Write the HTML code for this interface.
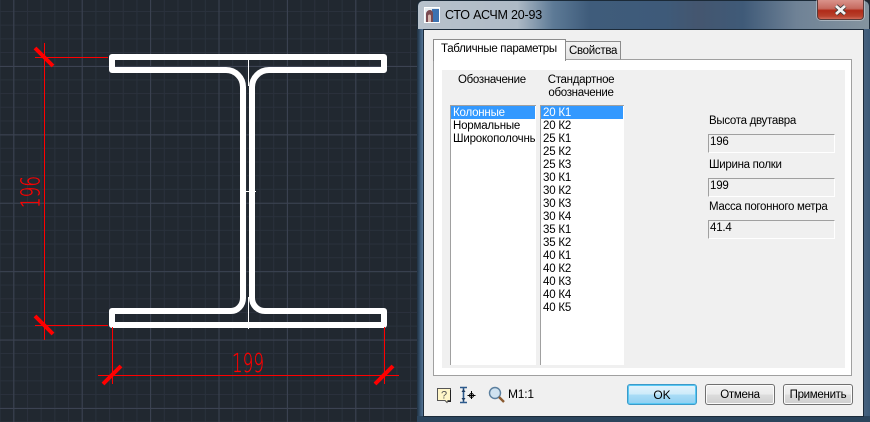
<!DOCTYPE html>
<html><head><meta charset="utf-8">
<style>
html,body{margin:0;padding:0;width:870px;height:422px;overflow:hidden;background:#212830}
*{box-sizing:border-box}
.a{position:absolute}
.t{position:absolute;font:11.5px/13px "Liberation Sans",sans-serif;letter-spacing:-.3px;color:#000;white-space:nowrap}
.row{position:absolute;left:0;right:0;height:13px;font:11.5px/15px "Liberation Sans",sans-serif;letter-spacing:-.2px;padding-left:2px;white-space:nowrap;overflow:hidden}
.sel{background:#3399ff;color:#fff;right:1px}
.box{position:absolute;left:708px;width:127px;height:19px;border:1px solid #fff;border-top-color:#a0a0a0;border-left-color:#a0a0a0;font:11.5px/15px "Liberation Sans",sans-serif;letter-spacing:-.2px;padding-left:1px;background:#f0f0f0}
.btn{position:absolute;top:384px;height:21px;border:1px solid #707070;border-radius:3px;background:linear-gradient(#f2f2f2 0%,#ebebeb 48%,#dcdcdc 52%,#cfcfcf 100%);font:11.5px/20px "Liberation Sans",sans-serif;letter-spacing:-.3px;text-align:center;box-shadow:inset 0 0 0 1px #fbfbfb}
</style></head><body>
<svg class="a" style="left:0;top:0" width="870" height="422" viewBox="0 0 870 422">
<defs>
<pattern id="mi" x="13.3" y="11" width="13.68" height="13.68" patternUnits="userSpaceOnUse">
<path d="M0.5 0V13.68M0 0.5H13.68" stroke="#2a313c" stroke-width="1" fill="none"/>
</pattern>
<pattern id="ma" x="13.3" y="66" width="68.4" height="68.4" patternUnits="userSpaceOnUse">
<path d="M0.5 0V68.4M0 0.5H68.4" stroke="#3c4352" stroke-width="1" fill="none"/>
</pattern>
</defs>
<rect width="870" height="422" fill="#212830"/>
<rect width="870" height="422" fill="url(#mi)"/>
<rect width="870" height="422" fill="url(#ma)"/>
<g fill="none" stroke="#fff" stroke-width="6" stroke-linejoin="round">
<path d="M112 57H384V70H269A17 17 0 0 0 252 87V298A13 13 0 0 0 265 311H384V325H112V311H231A12 13 0 0 0 243 298V87A17 17 0 0 0 226 70H112Z"/>
</g>
<path d="M248.5 60V86M248.5 297V329M245 191.5H256" stroke="#fff" stroke-width="1" fill="none"/>
<g fill="none" stroke="#ff0000" stroke-width="1">
<path d="M44.5 43V340M35 57.5H108M35 325.5H108M112.5 327V384M384.500 327V384M98 375.500H399"/>
</g>
<g fill="none" stroke="#ff0000" stroke-width="4">
<path d="M35 48L53 66M35 316L53 334M103 384L121 366M375 384L393 366"/>
</g>
<text x="248" y="372" text-anchor="middle" font-family="'DejaVu Sans','Liberation Sans',sans-serif" font-weight="200" font-size="26" fill="#ff0000" stroke="#ff0000" stroke-width=".3" textLength="32" lengthAdjust="spacingAndGlyphs">199</text>
<text transform="translate(39.500,192) rotate(-90)" text-anchor="middle" font-family="'DejaVu Sans','Liberation Sans',sans-serif" font-weight="200" font-size="26" fill="#ff0000" stroke="#ff0000" stroke-width=".3" textLength="32" lengthAdjust="spacingAndGlyphs">196</text>
</svg>

<!-- window -->
<div class="a" style="left:417px;top:0;width:453px;height:422px;border-radius:6px 6px 0 0;border:1px solid #1b2a38;background:linear-gradient(90deg,#b8c2cc 0,#aebac6 22%,#5d7a96 30%,#3f5c7b 38%,#3e5a79 55%,#44566f 62%,#3f5a78 72%,#6f8296 84%,#84949f 100%)"></div>
<div class="a" style="left:417px;top:29px;width:7px;height:393px;background:linear-gradient(90deg,#1f3040,#3c5a78 50%,#5d7e9e)"></div>
<div class="a" style="left:863px;top:29px;width:7px;height:393px;background:linear-gradient(90deg,#4a6480,#3c5a78)"></div>
<div class="a" style="left:417px;top:416px;width:453px;height:6px;background:#2b445c"></div>
<div class="a" style="left:864px;top:0;width:6px;height:1px;background:#212830"></div>
<div class="t" style="left:445px;top:8px;font-size:12.500px;line-height:15px;letter-spacing:-.2px;color:#000">СТО АСЧМ 20-93</div>
<!-- title icon -->
<svg class="a" style="left:424px;top:7px" width="16" height="16" viewBox="0 0 16 16">
<rect x="0.5" y="0.5" width="15" height="15" fill="#e8eef2" stroke="#fff"/>
<rect x="8" y="2" width="7" height="13" fill="#3d72b0"/>
<path d="M2 15V7C2 3 8 1 9 6V15Z" fill="#7a4a50"/>
<path d="M4 15V9C4 7 7 7 7 9V15Z" fill="#d8b8b0"/>
</svg>
<!-- close -->
<div class="a" style="left:817px;top:0;width:47px;height:20px;border:1px solid #5a3a38;border-top:none;border-radius:0 0 4px 4px;background:linear-gradient(#d9938b 0,#c66a5f 45%,#b02a18 55%,#b8402c 85%,#cf6a58 100%);box-shadow:0 0 0 1px rgba(255,255,255,.35)"></div>
<svg class="a" style="left:833px;top:4px" width="15" height="12" viewBox="0 0 15 12"><path d="M3 2L12 10M12 2L3 10" stroke="#3a3a3a" stroke-width="4.4"/><path d="M3 2L12 10M12 2L3 10" stroke="#f4f4f4" stroke-width="2.8"/></svg>

<!-- client -->
<div class="a" style="left:423px;top:29px;width:441px;height:388px;background:#f0f0f0;border:1px solid #1c2b3a"></div>

<!-- tab panel -->
<div class="a" style="left:433px;top:59px;width:419px;height:317px;background:#fff;border:1px solid #a0a0a0"></div>
<div class="a" style="left:565px;top:41px;width:56px;height:19px;background:linear-gradient(#f2f2f2,#e4e4e4);border:1px solid #8c8c8c;border-bottom:1px solid #a0a0a0"></div>
<div class="a" style="left:433px;top:39px;width:133px;height:22px;background:#fff;border:1px solid #8c8c8c;border-bottom:none"></div>
<div class="t" style="left:441px;top:43px">Табличные параметры</div>
<div class="t" style="left:569px;top:45px">Свойства</div>

<div class="a" style="left:442px;top:70px;width:403px;height:298px;background:#f0f0f0"></div>
<div class="t" style="left:458px;top:74px">Обозначение</div>
<div class="t" style="left:533px;top:74px;width:96px;text-align:center">Стандартное<br>обозначение</div>

<!-- list 1 -->
<div class="a" style="left:450px;top:105px;width:86px;height:260px;background:#fff;border-left:1px solid #a0a0a0;border-top:1px solid #a0a0a0;overflow:hidden">
<div class="row sel" style="top:0">Колонные</div>
<div class="row" style="top:13px">Нормальные</div>
<div class="row" style="top:26px">Широкополочны</div>
</div>
<!-- list 2 -->
<div class="a" style="left:540px;top:105px;width:84px;height:260px;background:#fff;border-left:1px solid #a0a0a0;border-top:1px solid #a0a0a0;overflow:hidden">
<div class="row sel" style="top:0">20 К1</div>
<div class="row" style="top:13px">20 К2</div>
<div class="row" style="top:26px">25 К1</div>
<div class="row" style="top:39px">25 К2</div>
<div class="row" style="top:52px">25 К3</div>
<div class="row" style="top:65px">30 К1</div>
<div class="row" style="top:78px">30 К2</div>
<div class="row" style="top:91px">30 К3</div>
<div class="row" style="top:104px">30 К4</div>
<div class="row" style="top:117px">35 К1</div>
<div class="row" style="top:130px">35 К2</div>
<div class="row" style="top:143px">40 К1</div>
<div class="row" style="top:156px">40 К2</div>
<div class="row" style="top:169px">40 К3</div>
<div class="row" style="top:182px">40 К4</div>
<div class="row" style="top:195px">40 К5</div>
</div>

<!-- right fields -->
<div class="t" style="left:709px;top:115px">Высота двутавра</div>
<div class="box" style="top:134px">196</div>
<div class="t" style="left:709px;top:159px">Ширина полки</div>
<div class="box" style="top:178px">199</div>
<div class="t" style="left:709px;top:201px">Масса погонного метра</div>
<div class="box" style="top:220px">41.4</div>

<!-- bottom tools -->
<svg class="a" style="left:436px;top:387px" width="16" height="17" viewBox="0 0 16 17">
<path d="M1.5 1.5H14.5V13.5H12L11 15.5L9 13.5H1.5Z" fill="#fff6c8" stroke="#555"/>
<path d="M14.5 3V14.5H12" stroke="#222" fill="none"/>
<text x="8" y="11.5" text-anchor="middle" font-family="Liberation Sans,sans-serif" font-size="11" fill="#555">?</text>
</svg>
<svg class="a" style="left:459px;top:386px" width="18" height="18" viewBox="0 0 18 18">
<path d="M1 1.5H8M1 16.5H8M4.5 2V16" stroke="#2c5a8c" stroke-width="1.6" fill="none"/>
<path d="M4.5 3L2.5 6H6.5ZM4.5 15L2.5 12H6.5Z" fill="#1c3a60"/>
<path d="M12.5 5V13M8.500 9.500H16.500" stroke="#000" fill="none"/>
<circle cx="12.500" cy="9.500" r="2" fill="none" stroke="#000"/>
</svg>
<svg class="a" style="left:488px;top:386px" width="17" height="17" viewBox="0 0 17 17">
<circle cx="7" cy="7" r="5.500" fill="#cfe2f0" stroke="#5b7f9e" stroke-width="1.400"/>
<path d="M11 11L16 16" stroke="#8a5a30" stroke-width="2.400"/>
</svg>
<div class="t" style="left:508px;top:388px;font-size:12px;letter-spacing:-.2px">М1:1</div>

<!-- buttons -->
<div class="btn" style="left:627px;width:70px;font-size:12px;letter-spacing:0;border-color:#3c9ac8;background:linear-gradient(#e4f4fc 0%,#cdebfa 48%,#a9dcf6 52%,#8fd0f2 100%);box-shadow:inset 0 0 0 1px #58c8f4">OK</div>
<div class="btn" style="left:705px;width:70px">Отмена</div>
<div class="btn" style="left:783px;width:70px">Применить</div>
</body></html>
